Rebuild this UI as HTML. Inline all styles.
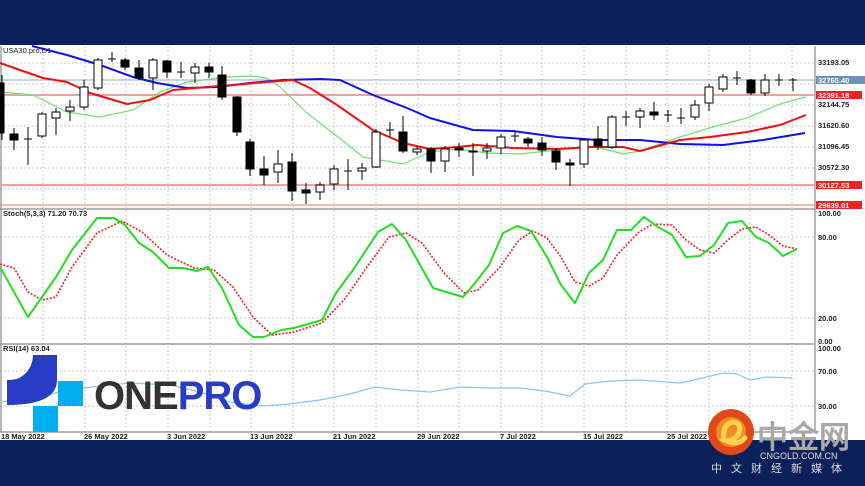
<!DOCTYPE html>
<html><head><meta charset="utf-8"><style>
body{margin:0;background:#0c215a;}
svg{display:block}
text{font-family:"Liberation Sans",sans-serif}
</style></head><body>
<svg width="865" height="486" viewBox="0 0 865 486" xmlns="http://www.w3.org/2000/svg">
<rect width="865" height="486" fill="#0c215a"/>
<rect x="0" y="45" width="865" height="395" fill="#fff"/>
<!-- grid verticals -->
<g stroke="#c8c8c8" stroke-dasharray="2,2" stroke-width="1">
<line x1="43" y1="46" x2="43" y2="432"/><line x1="85" y1="46" x2="85" y2="432"/><line x1="126" y1="46" x2="126" y2="432"/><line x1="168" y1="46" x2="168" y2="432"/><line x1="210" y1="46" x2="210" y2="432"/><line x1="251" y1="46" x2="251" y2="432"/><line x1="293" y1="46" x2="293" y2="432"/><line x1="334" y1="46" x2="334" y2="432"/><line x1="376" y1="46" x2="376" y2="432"/><line x1="418" y1="46" x2="418" y2="432"/><line x1="459" y1="46" x2="459" y2="432"/><line x1="501" y1="46" x2="501" y2="432"/><line x1="542" y1="46" x2="542" y2="432"/><line x1="584" y1="46" x2="584" y2="432"/><line x1="626" y1="46" x2="626" y2="432"/><line x1="667" y1="46" x2="667" y2="432"/><line x1="709" y1="46" x2="709" y2="432"/><line x1="750" y1="46" x2="750" y2="432"/><line x1="792" y1="46" x2="792" y2="432"/>
<line x1="0" y1="63" x2="815" y2="63"/><line x1="0" y1="84" x2="815" y2="84"/><line x1="0" y1="105" x2="815" y2="105"/><line x1="0" y1="126" x2="815" y2="126"/><line x1="0" y1="147" x2="815" y2="147"/><line x1="0" y1="168" x2="815" y2="168"/><line x1="0" y1="189" x2="815" y2="189"/>
<line x1="0" y1="237" x2="815" y2="237"/><line x1="0" y1="318" x2="815" y2="318"/>
<line x1="0" y1="371" x2="815" y2="371"/><line x1="0" y1="406" x2="815" y2="406"/>
</g>
<!-- pane borders -->
<g stroke="#888" stroke-width="1.2">
<line x1="0" y1="209" x2="815" y2="209"/><line x1="0" y1="344" x2="815" y2="344"/><line x1="0" y1="432" x2="815" y2="432"/>
<line x1="815" y1="46" x2="815" y2="432"/><line x1="1" y1="46" x2="1" y2="432"/>
</g>
<!-- horizontal levels -->
<line x1="0" y1="80" x2="815" y2="80" stroke="#8fa8c8" stroke-width="1"/>
<line x1="0" y1="95" x2="815" y2="95" stroke="#f5a0a0" stroke-width="2"/>
<line x1="0" y1="185" x2="815" y2="185" stroke="#f5a0a0" stroke-width="2"/>
<line x1="0" y1="205" x2="815" y2="205" stroke="#f07070" stroke-width="1"/>
<!-- MAs -->
<g fill="none" stroke-linejoin="round">
<polyline stroke="#70e070" stroke-width="1.2" points="0,92 33,95 67,112 100,117 133,110 160,92 187,82 227,77 250,76 267,78 280,87 307,113 333,133 363,157 403,164 430,152 457,149 487,153 520,154 557,150 597,147 623,154 640,151 680,137 713,127 747,118 780,104 806,97"/>
<polyline stroke="#1010ee" stroke-width="2" points="32,46 67,55 100,65 133,77 157,83 187,88 217,87 250,83 283,80 320,79 340,80 373,95 407,108 430,118 473,130 513,131 557,137 597,140 640,140 680,144 723,145 763,140 805,133"/>
<polyline stroke="#ee1111" stroke-width="2" points="0,63 20,70 43,78 67,82 90,93 127,104 150,100 173,90 207,87 233,85 267,82 293,80 310,88 337,105 373,130 403,143 430,149 457,147 477,145 513,148 557,149 590,147 623,147 640,151 680,140 710,137 747,132 780,125 806,115"/>
</g>
<!-- candles -->
<g stroke="#000" stroke-width="1">
<line x1="2" y1="75" x2="2" y2="140"/><rect x="-1" y="83" width="5" height="50" fill="#000"/>
<line x1="14" y1="128" x2="14" y2="150"/><rect x="10" y="134" width="8" height="6" fill="#000"/>
<line x1="28" y1="127" x2="28" y2="165"/><line x1="24" y1="139" x2="32" y2="139"/>
<line x1="42" y1="112" x2="42" y2="138"/><rect x="38" y="114" width="8" height="22" fill="#fff"/>
<line x1="56" y1="108" x2="56" y2="135"/><rect x="52" y="112" width="8" height="6" fill="#fff"/>
<line x1="70" y1="100" x2="70" y2="121"/><rect x="66" y="107" width="8" height="4" fill="#fff"/>
<line x1="84" y1="80" x2="84" y2="110"/><rect x="80" y="87" width="8" height="20" fill="#fff"/>
<line x1="98" y1="58" x2="98" y2="90"/><rect x="94" y="60" width="8" height="28" fill="#fff"/>
<line x1="112" y1="52" x2="112" y2="62"/><line x1="108" y1="59" x2="116" y2="59"/>
<line x1="125" y1="58" x2="125" y2="70"/><rect x="121" y="60" width="8" height="7" fill="#000"/>
<line x1="139" y1="60" x2="139" y2="80"/><rect x="135" y="68" width="8" height="10" fill="#000"/>
<line x1="153" y1="58" x2="153" y2="90"/><rect x="149" y="60" width="8" height="18" fill="#fff"/>
<line x1="167" y1="60" x2="167" y2="78"/><rect x="163" y="61" width="8" height="11" fill="#000"/>
<line x1="181" y1="62" x2="181" y2="78"/><line x1="177" y1="72" x2="185" y2="72"/>
<line x1="195" y1="63" x2="195" y2="83"/><rect x="191" y="67" width="8" height="6" fill="#fff"/>
<line x1="209" y1="63" x2="209" y2="78"/><rect x="205" y="67" width="8" height="5" fill="#000"/>
<line x1="222" y1="66" x2="222" y2="100"/><rect x="218" y="75" width="8" height="22" fill="#000"/>
<line x1="237" y1="96" x2="237" y2="136"/><rect x="233" y="97" width="8" height="35" fill="#000"/>
<line x1="250" y1="139" x2="250" y2="176"/><rect x="246" y="142" width="8" height="27" fill="#000"/>
<line x1="264" y1="156" x2="264" y2="185"/><rect x="260" y="169" width="8" height="6" fill="#000"/>
<line x1="278" y1="150" x2="278" y2="183"/><rect x="274" y="164" width="8" height="8" fill="#fff"/>
<line x1="292" y1="153" x2="292" y2="201"/><rect x="288" y="162" width="8" height="29" fill="#000"/>
<line x1="306" y1="183" x2="306" y2="204"/><rect x="302" y="190" width="8" height="3" fill="#000"/>
<line x1="320" y1="182" x2="320" y2="200"/><rect x="316" y="185" width="8" height="7" fill="#fff"/>
<line x1="334" y1="165" x2="334" y2="190"/><rect x="330" y="169" width="8" height="15" fill="#fff"/>
<line x1="348" y1="159" x2="348" y2="190"/><line x1="344" y1="171" x2="352" y2="171"/>
<line x1="362" y1="163" x2="362" y2="180"/><rect x="358" y="168" width="8" height="3" fill="#fff"/>
<line x1="376" y1="129" x2="376" y2="168"/><rect x="372" y="132" width="8" height="35" fill="#fff"/>
<line x1="390" y1="122" x2="390" y2="137"/><line x1="386" y1="130" x2="394" y2="130"/>
<line x1="403" y1="116" x2="403" y2="153"/><rect x="399" y="132" width="8" height="19" fill="#000"/>
<line x1="417" y1="147" x2="417" y2="155"/><rect x="413" y="149" width="8" height="3" fill="#fff"/>
<line x1="431" y1="147" x2="431" y2="173"/><rect x="427" y="149" width="8" height="12" fill="#000"/>
<line x1="445" y1="146" x2="445" y2="172"/><rect x="441" y="149" width="8" height="12" fill="#fff"/>
<line x1="459" y1="143" x2="459" y2="157"/><rect x="455" y="148" width="8" height="2" fill="#000"/>
<line x1="473" y1="143" x2="473" y2="176"/><rect x="469" y="151" width="8" height="1" fill="#000"/>
<line x1="487" y1="143" x2="487" y2="159"/><rect x="483" y="148" width="8" height="3" fill="#fff"/>
<line x1="501" y1="134" x2="501" y2="154"/><rect x="497" y="137" width="8" height="11" fill="#fff"/>
<line x1="515" y1="131" x2="515" y2="142"/><line x1="511" y1="136" x2="519" y2="136"/>
<line x1="528" y1="137" x2="528" y2="147"/><rect x="524" y="139" width="8" height="4" fill="#000"/>
<line x1="542" y1="137" x2="542" y2="156"/><rect x="538" y="143" width="8" height="7" fill="#000"/>
<line x1="556" y1="148" x2="556" y2="170"/><rect x="552" y="151" width="8" height="11" fill="#000"/>
<line x1="570" y1="159" x2="570" y2="186"/><rect x="566" y="163" width="8" height="2" fill="#000"/>
<line x1="584" y1="138" x2="584" y2="168"/><rect x="580" y="140" width="8" height="24" fill="#fff"/>
<line x1="598" y1="126" x2="598" y2="150"/><rect x="594" y="139" width="8" height="7" fill="#000"/>
<line x1="612" y1="115" x2="612" y2="149"/><rect x="608" y="117" width="8" height="30" fill="#fff"/>
<line x1="626" y1="111" x2="626" y2="126"/><line x1="622" y1="117" x2="630" y2="117"/>
<line x1="640" y1="108" x2="640" y2="128"/><rect x="636" y="111" width="8" height="6" fill="#fff"/>
<line x1="654" y1="102" x2="654" y2="120"/><rect x="650" y="112" width="8" height="3" fill="#000"/>
<line x1="668" y1="110" x2="668" y2="122"/><line x1="664" y1="115" x2="672" y2="115"/>
<line x1="681" y1="108" x2="681" y2="124"/><line x1="677" y1="118" x2="685" y2="118"/>
<line x1="695" y1="100" x2="695" y2="120"/><rect x="691" y="105" width="8" height="12" fill="#fff"/>
<line x1="709" y1="84" x2="709" y2="111"/><rect x="705" y="87" width="8" height="16" fill="#fff"/>
<line x1="723" y1="74" x2="723" y2="92"/><rect x="719" y="77" width="8" height="12" fill="#fff"/>
<line x1="737" y1="71" x2="737" y2="85"/><line x1="733" y1="78" x2="741" y2="78"/>
<line x1="751" y1="79" x2="751" y2="95"/><rect x="747" y="80" width="8" height="13" fill="#000"/>
<line x1="765" y1="74" x2="765" y2="96"/><rect x="761" y="80" width="8" height="13" fill="#fff"/>
<line x1="779" y1="74" x2="779" y2="86"/><line x1="775" y1="80" x2="783" y2="80"/>
<line x1="793" y1="78" x2="793" y2="91"/><line x1="789" y1="80" x2="797" y2="80"/>
</g>
<!-- stoch -->
<polyline fill="none" stroke="#ee2222" stroke-width="1.6" stroke-dasharray="2,1.5" points="0,264 14,268 28,292 42,300 56,297 72,267 97,233 122,221 142,232 167,255 194,268 214,270 233,287 253,317 272,335 294,332 322,323 344,300 367,267 389,237 406,233 422,243 444,273 464,293 478,290 500,267 519,240 533,231 547,238 561,257 575,282 589,286 603,278 617,255 639,232 653,224 672,225 686,240 700,250 714,253 728,240 742,229 756,227 769,235 783,246 797,249"/>
<polyline fill="none" stroke="#22dd22" stroke-width="2" stroke-linejoin="round" points="0,267 28,317 56,277 72,250 97,218 114,218 125,225 139,243 153,252 169,268 183,268 197,271 208,267 222,288 239,325 253,337 264,337 281,330 294,328 322,320 336,293 353,270 378,232 392,224 406,240 433,288 463,297 475,283 489,265 503,233 517,226 531,231 547,257 561,285 575,303 589,273 603,260 617,230 631,230 644,217 658,227 672,235 686,257 700,256 714,245 728,223 742,221 756,237 769,243 783,256 797,249"/>
<!-- RSI -->
<polyline fill="none" stroke="#88c4f8" stroke-width="1.2" points="0,402 40,397 67,390 100,386 130,383 170,385 200,392 230,402 260,406 290,404 320,400 350,394 375,387 400,390 430,392 460,387 490,388 520,388 545,391 570,396 585,384 610,381 640,380 680,383 707,377 723,373 737,374 750,380 767,377 792,378"/>
<!-- labels -->
<g font-size="7.5" font-weight="bold" fill="#222">
<text x="3" y="53" font-weight="normal">USA30.pro,D1</text>
<text x="3" y="216">Stoch(5,3,3) 71.20 70.73</text>
<text x="3" y="351">RSI(14) 63.04</text>
</g>
<g font-size="7.5" font-weight="bold" fill="#222">
<text x="818" y="65">33193.05</text>
<text x="818" y="107">32144.75</text>
<text x="818" y="128">31620.60</text>
<text x="818" y="149">31096.45</text>
<text x="818" y="170">30572.30</text>
<text x="818" y="216">100.00</text>
<text x="818" y="240">80.00</text>
<text x="818" y="321">20.00</text>
<text x="818" y="344">0.00</text>
<text x="818" y="351">100.00</text>
<text x="818" y="374">70.00</text>
<text x="818" y="409">30.00</text>
</g>
<rect x="816" y="76" width="49" height="8" fill="#6d8fb8"/><text x="818" y="83" font-size="7.5" font-weight="bold" fill="#fff">32765.40</text>
<rect x="816" y="91" width="46" height="8" fill="#ee2222"/><text x="818" y="98" font-size="7.5" font-weight="bold" fill="#fff">32391.18</text>
<rect x="816" y="181" width="46" height="8" fill="#ee2222"/><text x="818" y="188" font-size="7.5" font-weight="bold" fill="#fff">30127.53</text>
<rect x="816" y="201" width="46" height="8" fill="#ee2222"/><text x="818" y="208" font-size="7.5" font-weight="bold" fill="#fff">29639.01</text>
<g font-size="7.5" font-weight="bold" fill="#222">
<text x="1" y="439">18 May 2022</text><text x="84" y="439">26 May 2022</text><text x="167" y="439">3 Jun 2022</text><text x="250" y="439">13 Jun 2022</text><text x="333" y="439">21 Jun 2022</text><text x="417" y="439">29 Jun 2022</text><text x="500" y="439">7 Jul 2022</text><text x="583" y="439">15 Jul 2022</text><text x="667" y="439">25 Jul 2022</text>
</g>
<!-- ONEPRO logo -->
<path d="M57,355 L57,380 A50,50 0 0 0 7,405 L7,380 A25,25 0 0 1 7,405 Z" fill="none"/>
<path d="M33,355 L57,355 L57,380 Q57,405 7,405 L7,380 Q33,380 33,355 Z" fill="#283cc4"/>
<path d="M33,355 A26,26 0 0 1 7,381 L7,405 A50,50 0 0 0 57,355 Z" fill="#283cc4"/>
<rect x="58" y="381" width="25" height="25" fill="#00aff0"/>
<rect x="33" y="406" width="25" height="26" fill="#00aff0"/>
<text x="94" y="409" font-size="40" font-weight="bold" fill="#333" letter-spacing="-1">ONE<tspan fill="#283cc4">PRO</tspan></text>
<!-- CNGOLD logo -->
<circle cx="731" cy="432" r="23" fill="#e04a1a"/>
<circle cx="731" cy="432" r="15" fill="#f28a2a"/>
<path d="M724,440 Q722,424 733,422 Q742,423 739,433 Q735,440 727,441 Q738,446 745,438" fill="none" stroke="#ffd34a" stroke-width="5" stroke-linecap="round"/>
<text x="757" y="448" font-size="31" font-weight="bold" fill="#a8a8a8" font-family="'Liberation Sans','Noto Sans CJK SC',sans-serif">中金网</text>
<text x="760" y="459" font-size="9" fill="#ddd">CNGOLD.COM.CN</text>
<text x="711" y="472" font-size="11" fill="#ddd" letter-spacing="9" font-family="'Liberation Sans','Noto Sans CJK SC',sans-serif">中文财经新媒体</text>
</svg>
</body></html>
